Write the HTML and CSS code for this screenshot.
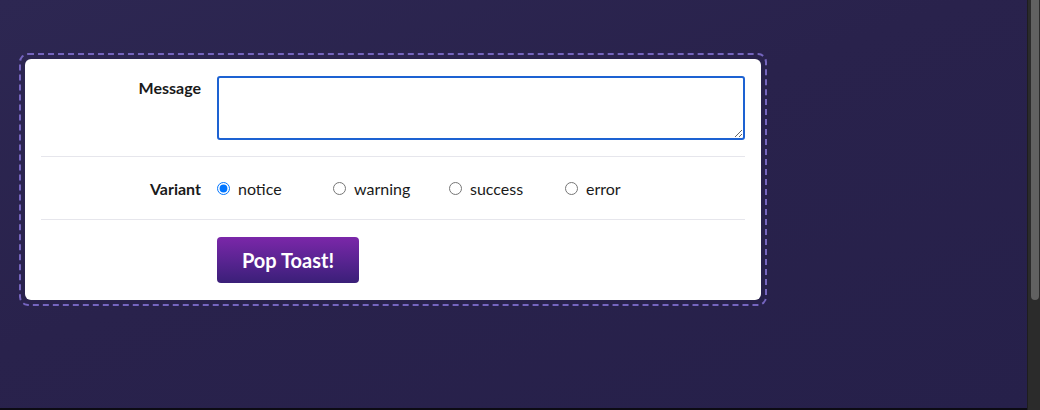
FILE: index.html
```html
<!DOCTYPE html>
<html lang="en">
<head>
<meta charset="utf-8">
<title>Toast demo</title>
<link rel="stylesheet" href="styles.css">
</head>
<body>
  <div class="screen">
    <main class="page">
      <div class="frame">
        <form class="card">
          <div class="row">
            <label class="label label-top" for="msg">Message</label>
            <textarea id="msg" class="message"></textarea>
          </div>
          <div class="row">
            <span class="label">Variant</span>
            <div class="options">
              <label class="option"><input type="radio" name="variant" checked> notice</label>
              <label class="option"><input type="radio" name="variant"> warning</label>
              <label class="option"><input type="radio" name="variant"> success</label>
              <label class="option"><input type="radio" name="variant"> error</label>
            </div>
          </div>
          <div class="row row-last">
            <span class="label"></span>
            <div><button type="button" class="pop">Pop Toast!</button></div>
          </div>
        </form>
      </div>
    </main>
    <div class="scrollbar" aria-hidden="true"><div class="thumb"></div></div>
  </div>
</body>
</html>
```

FILE: styles.css
```css
html, body {
  margin: 0;
  height: 100%;
  overflow: hidden;
  background: #28224a;
}
body {
  font-family: Lato, "Open Sans", sans-serif;
}
.screen {
  display: flex;
  height: 410px;
}
.page {
  flex: 1;
  padding: 53px 0 0 19px;
  box-sizing: border-box;
  border-bottom: 2px solid #0c0b14;
  background: linear-gradient(160deg, #2d2752 0%, #29224c 45%, #26204a 100%);
}
.scrollbar {
  width: 13px;
  background: #2b2b2b;
  border-left: 1px solid #1e1e1e;
  box-sizing: border-box;
  padding: 0 1px 0 3px;
}
.thumb {
  height: 300px;
  background: #616161;
  border-radius: 0 0 5px 5px;
}
.frame {
  width: 736px;
  padding: 4px;
  border: 2px dashed #7565bf;
  border-radius: 9px;
}
.card {
  background: #ffffff;
  border-radius: 6px;
  padding: 1px 16px 0;
  color: #1a1a1a;
}
.row {
  display: grid;
  grid-template-columns: 160px 1fr;
  column-gap: 16px;
  align-items: center;
  padding: 16px 0;
  border-bottom: 1px solid #e6e6ec;
}
.row-last {
  border-bottom: none;
  padding: 17px 0 17px;
}
.label {
  text-align: right;
  font-weight: 700;
  font-size: 16px;
}
.label-top {
  align-self: start;
  padding-top: 2px;
}
.message {
  display: block;
  box-sizing: border-box;
  width: 100%;
  height: 64px;
  margin: 0;
  border: 2px solid #1d62d2;
  border-radius: 3px;
  outline: none;
  font-family: inherit;
  font-size: 15px;
  resize: both;
}
.options {
  display: flex;
  align-items: center;
  height: 30px;
}
.option {
  width: 116px;
  display: flex;
  align-items: center;
  font-size: 16px;
  color: #1a1a1a;
}
.option input {
  margin: 0 8px 0 0;
  width: 13px;
  height: 13px;
}
.pop {
  display: block;
  width: 142px;
  height: 46px;
  border: none;
  border-radius: 4px;
  background: linear-gradient(180deg, #7b27a9 0%, #5a2492 50%, #3a1f78 100%);
  color: #ffffff;
  font-family: inherit;
  font-weight: 700;
  font-size: 20px;
  cursor: pointer;
}
```
